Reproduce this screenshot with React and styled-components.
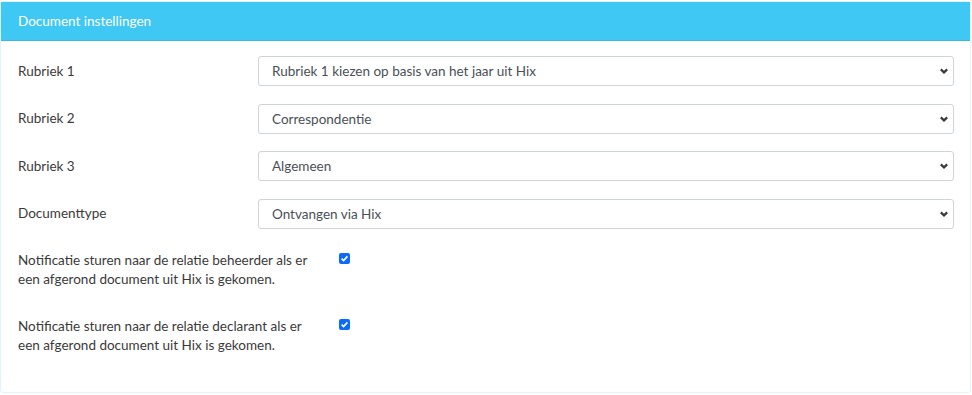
import React from "react"
import styled, { createGlobalStyle } from "styled-components"

const GlobalStyle = createGlobalStyle`
  body {
    margin: 0;
    background: #ffffff;
    font-family: "Lato", "Noto Sans", sans-serif;
  }
`

const Card = styled.div`
  margin: 1px 1px 0 0;
  border: 1px solid #dff4fc;
  border-radius: 3px;
  height: 392px;
  box-sizing: border-box;
  background: #fff;
`

const CardHeader = styled.div`
  background: #40c8f4;
  border-bottom: 1px solid #38b8e2;
  height: 38px;
  display: flex;
  align-items: center;
  padding: 0 17px;
  color: #fff;
  font-size: 13.5px;
`

const CardBody = styled.div`
  padding: 15px 16px 0 17px;
  display: flex;
  flex-direction: column;
`

const SelectRow = styled.div`
  display: grid;
  grid-template-columns: 240px 696px;
  align-items: center;
  height: 30px;
  margin-bottom: 17.5px;
`

const Label = styled.label`
  font-size: 13.5px;
  color: #3a3a3a;
  line-height: 19px;
  max-width: 300px;
`

const SelectBox = styled.div`
  height: 30px;
  box-sizing: border-box;
  border: 1px solid #ced4da;
  border-radius: 3px;
  display: flex;
  align-items: center;
  justify-content: space-between;
  padding: 0 4px 0 13px;
  font-size: 13.5px;
  color: #495057;
`

const CheckRow = styled.div`
  display: grid;
  grid-template-columns: 321px 20px;
  align-items: start;
  margin-top: ${p => p.$top}px;
`

const CheckBox = styled.span`
  width: 11px;
  height: 11px;
  margin-top: 2px;
  border-radius: 2px;
  background: #0b6bf7;
  display: flex;
  align-items: center;
  justify-content: center;
`

const Chevron = () => (
  <svg width="10" height="8" viewBox="0 0 10 8">
    <path d="M1.8 2.4 L5 5.4 L8.2 2.4" fill="none" stroke="#343a40" strokeWidth="2.2" />
  </svg>
)

const Tick = () => (
  <svg width="9" height="9" viewBox="0 0 9 9">
    <path d="M1.6 4.6 L3.6 6.6 L7.4 2.4" fill="none" stroke="#fff" strokeWidth="1.6" />
  </svg>
)

const rows = [
  ["Rubriek 1", "Rubriek 1 kiezen op basis van het jaar uit Hix"],
  ["Rubriek 2", "Correspondentie"],
  ["Rubriek 3", "Algemeen"],
  ["Documenttype", "Ontvangen via Hix"],
]

const App = () => (
  <>
    <GlobalStyle />
    <Card>
      <CardHeader>Document instellingen</CardHeader>
      <CardBody>
        {rows.map(([label, value]) => (
          <SelectRow key={label}>
            <Label>{label}</Label>
            <SelectBox>
              {value}
              <Chevron />
            </SelectBox>
          </SelectRow>
        ))}
        <CheckRow $top={5}>
          <Label>Notificatie sturen naar de relatie beheerder als er een afgerond document uit Hix is gekomen.</Label>
          <CheckBox><Tick /></CheckBox>
        </CheckRow>
        <CheckRow $top={28}>
          <Label>Notificatie sturen naar de relatie declarant als er een afgerond document uit Hix is gekomen.</Label>
          <CheckBox><Tick /></CheckBox>
        </CheckRow>
      </CardBody>
    </Card>
  </>
)

export default App
